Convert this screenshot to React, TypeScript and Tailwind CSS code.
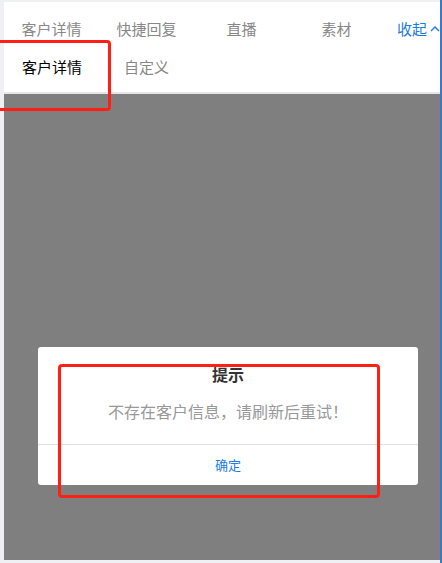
export default function App() {
    const topTabs = ["客户详情", "快捷回复", "直播", "素材"];
    return (
        <div
            className="relative flex h-[563px] w-[442px] overflow-hidden bg-[#eef0f3]"
            style={{fontFamily: '"Noto Sans CJK SC", "Liberation Sans", sans-serif'}}
        >
            <div className="ml-[4px] mt-[2px] mb-[3px] flex w-[436px] flex-col">
                <div className="flex h-[90px] flex-col bg-white">
                    <div className="flex h-[54px] items-center whitespace-nowrap text-[15px] text-[#888]">
                        {topTabs.map((t) => (
                            <div key={t} className="w-[95px] shrink-0 text-center">
                                {t}
                            </div>
                        ))}
                        <div className="ml-[13px] flex shrink-0 items-center gap-[3px] text-[#1e7be0]">
                            收起
                            <svg width="10" height="8" viewBox="0 0 10 8" fill="none" stroke="#1e7be0" strokeWidth="1.4">
                                <path d="M1 6 L5 2 L9 6"/>
                            </svg>
                        </div>
                    </div>
                    <div className="flex h-[28px] items-start whitespace-nowrap text-[15px]">
                        <div className="ml-[14px] w-[68px] text-center text-black">客户详情</div>
                        <div className="ml-[38px] text-[#888]">自定义</div>
                    </div>
                </div>
                <div className="h-[2px] bg-[#e6e6e6]"/>
                <div className="flex flex-1 items-start bg-[#7f7f7f] pt-[253px]">
                    <div className="ml-[34px] flex w-[380px] flex-col rounded-[3px] bg-white">
                        <div className="pt-[17px] text-center text-[16px] font-bold leading-[20px] text-[#333]">提示</div>
                        <div className="pt-[16px] pb-[22px] text-center text-[16px] leading-[22px] text-[#999]">
                            不存在客户信息，请刷新后重试！
                        </div>
                        <div className="h-px bg-[#e0e0e0]"/>
                        <div className="flex h-[40px] items-center justify-center text-[13px] text-[#1e7be0]">确定</div>
                    </div>
                </div>
            </div>
            <div className="w-[2px] bg-[#3a78c8]"/>
            {/* annotation boxes */}
            <div className="absolute left-[-10px] top-[40px] h-[71px] w-[121px] rounded-[4px] border-[3px] border-[#ff2015]"/>
            <div className="absolute left-[58px] top-[364px] h-[134px] w-[322px] rounded-[4px] border-[3px] border-[#ff2015]"/>
        </div>
    );
}
